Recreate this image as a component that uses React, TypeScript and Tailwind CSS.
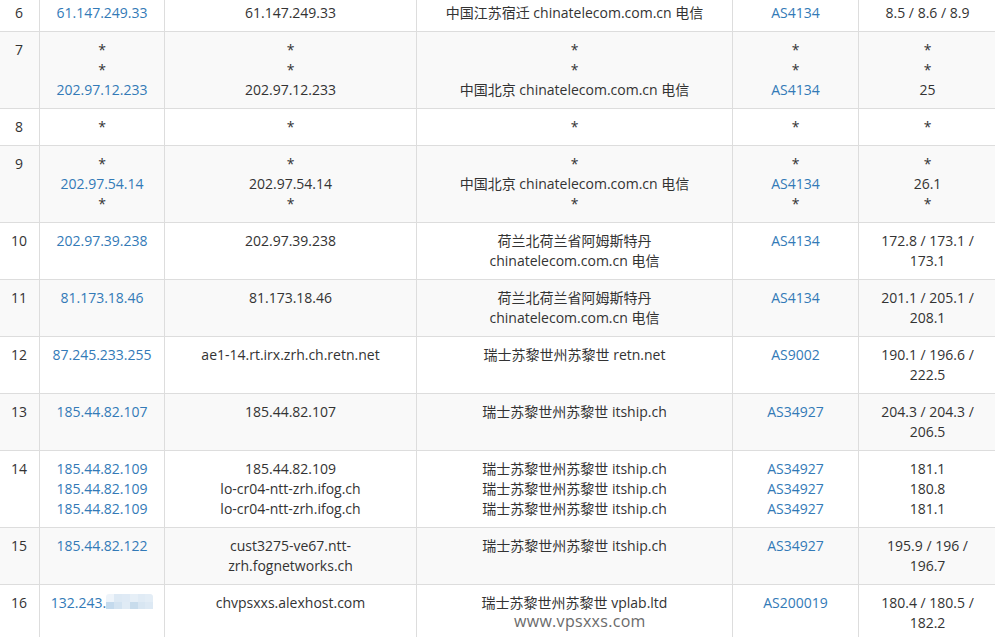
const rows: { n: number; ip: string[]; host: string[]; geo: string[]; as: string[]; ms: string[] }[] = [
  { n: 6, ip: ["61.147.249.33"], host: ["61.147.249.33"], geo: ["中国江苏宿迁 chinatelecom.com.cn 电信"], as: ["AS4134"], ms: ["8.5 / 8.6 / 8.9"] },
  { n: 7, ip: ["*", "*", "202.97.12.233"], host: ["*", "*", "202.97.12.233"], geo: ["*", "*", "中国北京 chinatelecom.com.cn 电信"], as: ["*", "*", "AS4134"], ms: ["*", "*", "25"] },
  { n: 8, ip: ["*"], host: ["*"], geo: ["*"], as: ["*"], ms: ["*"] },
  { n: 9, ip: ["*", "202.97.54.14", "*"], host: ["*", "202.97.54.14", "*"], geo: ["*", "中国北京 chinatelecom.com.cn 电信", "*"], as: ["*", "AS4134", "*"], ms: ["*", "26.1", "*"] },
  { n: 10, ip: ["202.97.39.238"], host: ["202.97.39.238"], geo: ["荷兰北荷兰省阿姆斯特丹", "chinatelecom.com.cn 电信"], as: ["AS4134"], ms: ["172.8 / 173.1 / 173.1"] },
  { n: 11, ip: ["81.173.18.46"], host: ["81.173.18.46"], geo: ["荷兰北荷兰省阿姆斯特丹", "chinatelecom.com.cn 电信"], as: ["AS4134"], ms: ["201.1 / 205.1 / 208.1"] },
  { n: 12, ip: ["87.245.233.255"], host: ["ae1-14.rt.irx.zrh.ch.retn.net"], geo: ["瑞士苏黎世州苏黎世 retn.net"], as: ["AS9002"], ms: ["190.1 / 196.6 / 222.5"] },
  { n: 13, ip: ["185.44.82.107"], host: ["185.44.82.107"], geo: ["瑞士苏黎世州苏黎世 itship.ch"], as: ["AS34927"], ms: ["204.3 / 204.3 / 206.5"] },
  { n: 14, ip: ["185.44.82.109", "185.44.82.109", "185.44.82.109"], host: ["185.44.82.109", "lo-cr04-ntt-zrh.ifog.ch", "lo-cr04-ntt-zrh.ifog.ch"], geo: ["瑞士苏黎世州苏黎世 itship.ch", "瑞士苏黎世州苏黎世 itship.ch", "瑞士苏黎世州苏黎世 itship.ch"], as: ["AS34927", "AS34927", "AS34927"], ms: ["181.1", "180.8", "181.1"] },
  { n: 15, ip: ["185.44.82.122"], host: ["cust3275-ve67.ntt-zrh.fognetworks.ch"], geo: ["瑞士苏黎世州苏黎世 itship.ch"], as: ["AS34927"], ms: ["195.9 / 196 /", "196.7"] },
  { n: 16, ip: ["132.243."], host: ["chvpsxxs.alexhost.com"], geo: ["瑞士苏黎世州苏黎世 vplab.ltd"], as: ["AS200019"], ms: ["180.4 / 180.5 / 182.2"] },
];

// mosaic that hides the end of the address in row 16
const mosaic = [
  "bg-[#eef4fa]", "bg-[#dde9f4]", "bg-[#dfeaf5]", "bg-[#e6eff7]", "bg-[#e0ebf5]", "bg-[#e3edf6]",
  "bg-[#c4daed]", "bg-[#d3e3f1]", "bg-[#e0ebf5]", "bg-[#c8dcec]", "bg-[#d8e6f2]", "bg-[#dde9f4]",
];

function Mosaic() {
  return (
    <span className="mt-px inline-grid h-[15px] w-[47px] grid-cols-6 grid-rows-2 overflow-hidden rounded-t-[3px] align-top">
      {mosaic.map((c, i) => (
        <span key={i} className={c} />
      ))}
    </span>
  );
}

function Lines({ items, link, masked }: { items: string[]; link?: boolean; masked?: boolean }) {
  return (
    <>
      {items.map((t, i) => (
        <div key={i} className={link && t !== "*" ? "text-[#337ab7]" : ""}>
          {t}
          {masked && <Mosaic />}
        </div>
      ))}
    </>
  );
}

export default function App() {
  const cell = "border border-[#ddd] p-2 align-top break-words";
  return (
    <div className="relative h-[637px] w-[995px] overflow-hidden bg-white font-['Open_Sans','Noto_Sans_CJK_SC',sans-serif] text-[14px] leading-5 text-[#333]">
      <table className="-mt-[6px] -ml-[2px] w-[998px] table-fixed border-collapse text-center">
        <colgroup>
          <col className="w-[41px]" />
          <col className="w-[125px]" />
          <col className="w-[252px]" />
          <col className="w-[316px]" />
          <col className="w-[126px]" />
          <col className="w-[138px]" />
        </colgroup>
        <tbody>
          {rows.map((r) => (
            <tr key={r.n} className="even:bg-[#f9f9f9]">
              <td className={cell}>{r.n}</td>
              <td className={cell}>
                <Lines items={r.ip} link masked={r.n === 16} />
              </td>
              <td className={cell}>
                <Lines items={r.host} />
              </td>
              <td className={cell}>
                <Lines items={r.geo} />
              </td>
              <td className={cell}>
                <Lines items={r.as} link />
              </td>
              <td className={cell}>
                <Lines items={r.ms} />
              </td>
            </tr>
          ))}
        </tbody>
      </table>
      <div className="absolute top-[611px] left-[514px] text-[16px] tracking-[0.3px] text-[#6b6b6b]">www.vpsxxs.com</div>
    </div>
  );
}
